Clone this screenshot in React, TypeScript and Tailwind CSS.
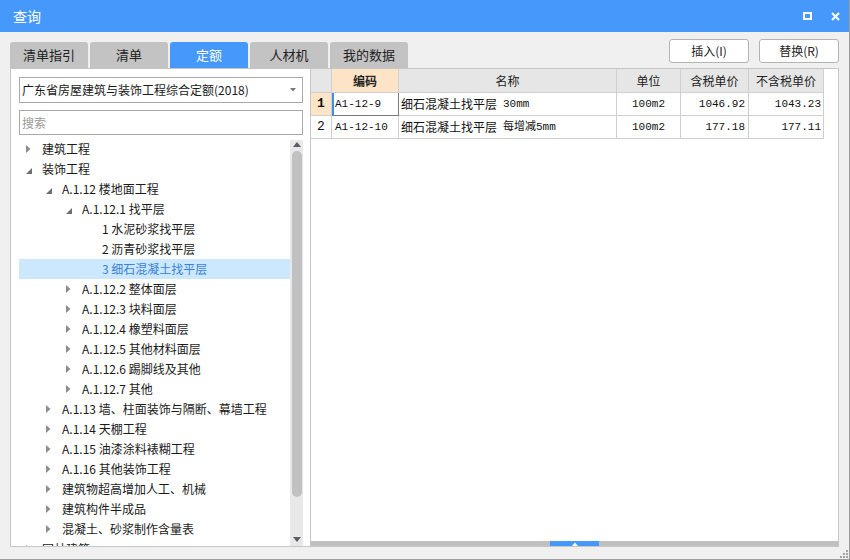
import React from 'react';

type TreeNode = { level: number; label: string; icon: 'open' | 'closed' | 'none'; selected?: boolean };

const tree: TreeNode[] = [
  { level: 0, label: '建筑工程', icon: 'closed' },
  { level: 0, label: '装饰工程', icon: 'open' },
  { level: 1, label: 'A.1.12 楼地面工程', icon: 'open' },
  { level: 2, label: 'A.1.12.1 找平层', icon: 'open' },
  { level: 3, label: '1 水泥砂浆找平层', icon: 'none' },
  { level: 3, label: '2 沥青砂浆找平层', icon: 'none' },
  { level: 3, label: '3 细石混凝土找平层', icon: 'none', selected: true },
  { level: 2, label: 'A.1.12.2 整体面层', icon: 'closed' },
  { level: 2, label: 'A.1.12.3 块料面层', icon: 'closed' },
  { level: 2, label: 'A.1.12.4 橡塑料面层', icon: 'closed' },
  { level: 2, label: 'A.1.12.5 其他材料面层', icon: 'closed' },
  { level: 2, label: 'A.1.12.6 踢脚线及其他', icon: 'closed' },
  { level: 2, label: 'A.1.12.7 其他', icon: 'closed' },
  { level: 1, label: 'A.1.13 墙、柱面装饰与隔断、幕墙工程', icon: 'closed' },
  { level: 1, label: 'A.1.14 天棚工程', icon: 'closed' },
  { level: 1, label: 'A.1.15 油漆涂料裱糊工程', icon: 'closed' },
  { level: 1, label: 'A.1.16 其他装饰工程', icon: 'closed' },
  { level: 1, label: '建筑物超高增加人工、机械', icon: 'closed' },
  { level: 1, label: '建筑构件半成品', icon: 'closed' },
  { level: 1, label: '混凝土、砂浆制作含量表', icon: 'closed' },
  { level: 0, label: '园林建筑', icon: 'closed' },
];

const indent = ['pl-[0px]', 'pl-[20px]', 'pl-[40px]', 'pl-[60px]'];

const tabs = ['清单指引', '清单', '定额', '人材机', '我的数据'];

const rows = [
  { no: '1', code: 'A1-12-9', name: '细石混凝土找平层 30mm', unit: '100m2', tax: '1046.92', notax: '1043.23', active: true },
  { no: '2', code: 'A1-12-10', name: '细石混凝土找平层 每增减5mm', unit: '100m2', tax: '177.18', notax: '177.11', active: false },
];

const mono = "font-['Liberation_Mono','Noto_Sans_CJK_SC',monospace]";

function TreeIcon({ kind }: { kind: TreeNode['icon'] }) {
  if (kind === 'closed')
    return (
      <svg width="5" height="8" viewBox="0 0 5 8">
        <path d="M0 0 L4.5 4 L0 8 Z" fill="#8c8c8c" />
      </svg>
    );
  if (kind === 'open')
    return (
      <svg width="6" height="6" viewBox="0 0 6 6" className="mt-[3px]">
        <path d="M6 0 L6 6 L0 6 Z" fill="#6e6e6e" />
      </svg>
    );
  return null;
}

export default function App() {
  return (
    <div className="relative flex h-[560px] w-[850px] flex-col overflow-hidden border-r border-b border-[#9c9c9c] bg-[#f0f0f0] font-['Noto_Sans_CJK_SC','Noto_Sans',sans-serif] text-[12px] text-[#1a1a1a]">
      {/* title bar */}
      <div className="flex h-[32px] shrink-0 items-center justify-between bg-[#4699fb] pr-[9px] pl-[13px]">
        <span className="text-[14px] text-white">查询</span>
        <div className="flex items-center gap-[19px]">
          <svg width="9" height="8" viewBox="0 0 9 8">
            <rect x="1" y="1" width="7" height="6" fill="none" stroke="#fff" strokeWidth="2" />
          </svg>
          <svg width="9" height="9" viewBox="0 0 9 9">
            <path d="M1 1 L8 8 M8 1 L1 8" stroke="#fff" strokeWidth="2" />
          </svg>
        </div>
      </div>

      {/* tabs + buttons */}
      <div className="flex h-[36px] shrink-0 justify-between px-[10px]">
        <div className="flex gap-[2px] self-end">
          {tabs.map((t) => (
            <div
              key={t}
              className={`flex h-[26px] w-[78px] items-center justify-center rounded-t-[3px] text-[13px] ${
                t === '定额' ? 'bg-[#4699fb] text-white' : 'bg-[#c3c3c3] text-[#222]'
              }`}
            >
              {t}
            </div>
          ))}
        </div>
        <div className="mt-[7px] flex gap-[10px]">
          <button className="h-[24px] w-[80px] rounded-[3px] border border-[#b4b4b4] bg-white text-[12px] text-[#222]">插入(I)</button>
          <button className="h-[24px] w-[80px] rounded-[3px] border border-[#b4b4b4] bg-white text-[12px] text-[#222]">替换(R)</button>
        </div>
      </div>

      {/* main panel */}
      <div className="mx-[10px] flex h-[479px] shrink-0 border border-[#c6c6c6]">
        {/* left: tree */}
        <div className="flex w-[299px] shrink-0 flex-col bg-white pt-[8px] pl-[8px]">
          <div className="flex h-[26px] w-[284px] items-center justify-between border border-[#a9a9a9] pr-[6px] pl-[2px]">
            <span>广东省房屋建筑与装饰工程综合定额(2018)</span>
            <svg width="6" height="4" viewBox="0 0 6 4">
              <path d="M0 0 L6 0 L3 3.5 Z" fill="#7a7a7a" />
            </svg>
          </div>
          <div className="mt-[7px] flex h-[25px] w-[284px] items-center border border-[#a9a9a9] pl-[2px] text-[#9a9a9a]">
            搜索
          </div>
          <div className="mt-[4px] flex min-h-0 flex-1">
            <div className="w-[271px] overflow-hidden">
              {tree.map((n, i) => (
                <div
                  key={i}
                  className={`flex h-[20px] items-center whitespace-nowrap ${indent[n.level]} ${
                    n.selected ? 'bg-[#cce8ff] text-[#3b82d6]' : ''
                  }`}
                >
                  <span className="flex w-[23px] shrink-0 items-center pl-[7px]">
                    <TreeIcon kind={n.icon} />
                  </span>
                  <span>{n.label}</span>
                </div>
              ))}
            </div>
            {/* scrollbar */}
            <div className="mt-[1px] flex w-[13px] flex-col items-center bg-[#e8e8e8]">
              <div className="flex h-[11px] items-start justify-center pt-[2px]">
                <svg width="8" height="5" viewBox="0 0 8 5">
                  <path d="M0 5 L4 0 L8 5 Z" fill="#5c5c66" />
                </svg>
              </div>
              <div className="h-[346px] w-[10px] rounded-full bg-[#c1c1c1]" />
              <div className="flex-1" />
              <div className="flex h-[10px] items-start justify-center pt-[1px]">
                <svg width="8" height="5" viewBox="0 0 8 5">
                  <path d="M0 0 L8 0 L4 5 Z" fill="#5c5c66" />
                </svg>
              </div>
            </div>
          </div>
        </div>

        {/* right: table */}
        <div className="flex min-w-0 flex-1 flex-col border-l border-[#c6c6c6] bg-white">
          <div className="w-[513px]">
            <div className="flex h-[24px] text-[12px] text-[#222]">
              <div className="w-[21px] border-r border-b border-[#cfcfcf] bg-[#e6e6e6]" />
              <div className="flex w-[67px] items-center justify-center border-r border-b border-[#cfcfcf] bg-[#fde4c6] font-bold">编码</div>
              <div className="flex w-[218px] items-center justify-center border-r border-b border-[#cfcfcf] bg-[#e6e6e6]">名称</div>
              <div className="flex w-[64px] items-center justify-center border-r border-b border-[#cfcfcf] bg-[#e6e6e6]">单位</div>
              <div className="flex w-[68px] items-center justify-center border-r border-b border-[#cfcfcf] bg-[#e6e6e6]">含税单价</div>
              <div className="flex w-[75px] items-center justify-center border-r border-b border-[#cfcfcf] bg-[#e6e6e6]">不含税单价</div>
            </div>
            {rows.map((r) => (
              <div key={r.no} className={`flex h-[23px] text-[12px] text-[#111] ${mono}`}>
                <div
                  className={`flex w-[21px] items-center justify-center border-r border-b border-[#cfcfcf] text-[13px] ${
                    r.active ? 'bg-[#fde4c6] font-bold' : ''
                  }`}
                >
                  {r.no}
                </div>
                <div
                  className={`relative flex w-[67px] items-center border-r border-b pl-[3px] text-[11px] ${
                    r.active ? 'border-[#7c7c7c]' : 'border-[#cfcfcf]'
                  }`}
                >
                  {r.active && <span className="absolute top-0 bottom-0 left-0 w-[2px] bg-[#3b8ff2]" />}
                  {r.code}
                </div>
                <div className="flex w-[218px] items-center border-r border-b border-[#cfcfcf] pl-[2px] text-[11px]">
                  {r.name.split(' ').map((part, i) => (
                    <span key={i} className={i === 0 ? "font-['Noto_Sans_CJK_SC',sans-serif] text-[12px]" : 'pl-[6px]'}>
                      {part}
                    </span>
                  ))}
                </div>
                <div className="flex w-[64px] items-center justify-center border-r border-b border-[#cfcfcf] text-[11px]">{r.unit}</div>
                <div className="flex w-[68px] items-center justify-end border-r border-b border-[#cfcfcf] pr-[3px] text-[11px]">{r.tax}</div>
                <div className="flex w-[75px] items-center justify-end border-r border-b border-[#cfcfcf] pr-[2px] text-[11px]">{r.notax}</div>
              </div>
            ))}
          </div>
          <div className="flex-1" />
          <div className="flex h-[5px] justify-center bg-[#c0c0c0]">
            <div className="flex w-[49px] items-center justify-center bg-[#4699fb]">
              <svg width="6" height="4" viewBox="0 0 6 4">
                <path d="M0 4 L3 0.5 L6 4 Z" fill="#fff" />
              </svg>
            </div>
          </div>
        </div>
      </div>

      {/* resize grip */}
      <svg width="8" height="8" viewBox="0 0 8 8" className="absolute right-[1px] bottom-[1px]">
        <rect x="6" y="0" width="2" height="2" fill="#a3a3a3" />
        <rect x="3" y="3" width="2" height="2" fill="#a3a3a3" />
        <rect x="6" y="3" width="2" height="2" fill="#a3a3a3" />
        <rect x="0" y="6" width="2" height="2" fill="#a3a3a3" />
        <rect x="3" y="6" width="2" height="2" fill="#a3a3a3" />
        <rect x="6" y="6" width="2" height="2" fill="#a3a3a3" />
      </svg>
    </div>
  );
}
